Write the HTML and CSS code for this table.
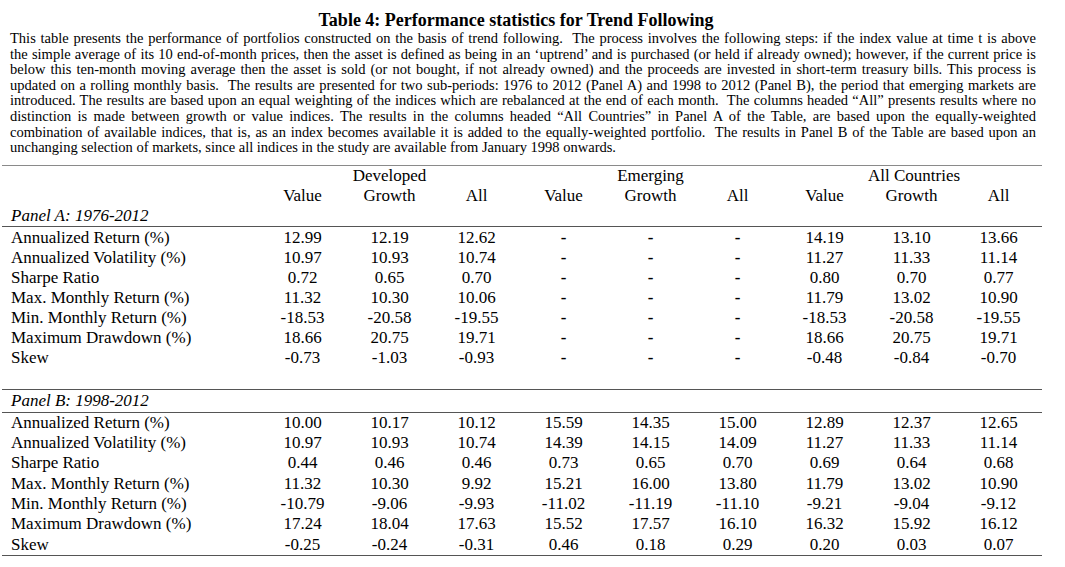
FILE: index.html
```html
<!DOCTYPE html>
<html>
<head>
<meta charset="utf-8">
<link rel="stylesheet" href="styles.css">
</head>
<body>
<div class="page">
  <h1 class="title">Table 4: Performance statistics for Trend Following</h1>
  <p class="caption">
    <span class="ln">This table presents the performance of portfolios constructed on the basis of trend following.&nbsp; The process involves the following steps: if the index value at time t is above</span>
    <span class="ln">the simple average of its 10 end-of-month prices, then the asset is defined as being in an ‘uptrend’ and is purchased (or held if already owned); however, if the current price is</span>
    <span class="ln">below this ten-month moving average then the asset is sold (or not bought, if not already owned) and the proceeds are invested in short-term treasury bills. This process is</span>
    <span class="ln">updated on a rolling monthly basis.&nbsp; The results are presented for two sub-periods: 1976 to 2012 (Panel A) and 1998 to 2012 (Panel B), the period that emerging markets are</span>
    <span class="ln">introduced. The results are based upon an equal weighting of the indices which are rebalanced at the end of each month.&nbsp; The columns headed “All” presents results where no</span>
    <span class="ln">distinction is made between growth or value indices. The results in the columns headed “All Countries” in Panel A of the Table, are based upon the equally-weighted</span>
    <span class="ln">combination of available indices, that is, as an index becomes available it is added to the equally-weighted portfolio.&nbsp; The results in Panel B of the Table are based upon an</span>
    <span class="ln last">unchanging selection of markets, since all indices in the study are available from January 1998 onwards.</span>
  </p>
  <table class="stats">
    <colgroup>
      <col class="c-label">
      <col class="c-num"><col class="c-num"><col class="c-num">
      <col class="c-num"><col class="c-num"><col class="c-num">
      <col class="c-num"><col class="c-num"><col class="c-num">
    </colgroup>
    <thead>
      <tr>
        <th></th>
        <th></th><th>Developed</th><th></th>
        <th></th><th>Emerging</th><th></th>
        <th></th><th>All Countries</th><th></th>
      </tr>
      <tr>
        <th></th>
        <th>Value</th><th>Growth</th><th>All</th>
        <th>Value</th><th>Growth</th><th>All</th>
        <th>Value</th><th>Growth</th><th>All</th>
      </tr>
      <tr class="panel">
        <td class="label"><em>Panel A: 1976-2012</em></td>
        <td></td><td></td><td></td><td></td><td></td><td></td><td></td><td></td><td></td>
      </tr>
    </thead>
    <tbody class="first">
      <tr><td class="label">Annualized Return (%)</td><td>12.99</td><td>12.19</td><td>12.62</td><td class="dash">-</td><td class="dash">-</td><td class="dash">-</td><td>14.19</td><td>13.10</td><td>13.66</td></tr>
      <tr><td class="label">Annualized Volatility (%)</td><td>10.97</td><td>10.93</td><td>10.74</td><td class="dash">-</td><td class="dash">-</td><td class="dash">-</td><td>11.27</td><td>11.33</td><td>11.14</td></tr>
      <tr><td class="label">Sharpe Ratio</td><td>0.72</td><td>0.65</td><td>0.70</td><td class="dash">-</td><td class="dash">-</td><td class="dash">-</td><td>0.80</td><td>0.70</td><td>0.77</td></tr>
      <tr><td class="label">Max. Monthly Return (%)</td><td>11.32</td><td>10.30</td><td>10.06</td><td class="dash">-</td><td class="dash">-</td><td class="dash">-</td><td>11.79</td><td>13.02</td><td>10.90</td></tr>
      <tr><td class="label">Min. Monthly Return (%)</td><td>-18.53</td><td>-20.58</td><td>-19.55</td><td class="dash">-</td><td class="dash">-</td><td class="dash">-</td><td>-18.53</td><td>-20.58</td><td>-19.55</td></tr>
      <tr><td class="label">Maximum Drawdown (%)</td><td>18.66</td><td>20.75</td><td>19.71</td><td class="dash">-</td><td class="dash">-</td><td class="dash">-</td><td>18.66</td><td>20.75</td><td>19.71</td></tr>
      <tr><td class="label">Skew</td><td>-0.73</td><td>-1.03</td><td>-0.93</td><td class="dash">-</td><td class="dash">-</td><td class="dash">-</td><td>-0.48</td><td>-0.84</td><td>-0.70</td></tr>
      <tr class="spacer"><td colspan="10"></td></tr>
    </tbody>
    <tbody class="panel-b">
      <tr class="panel"><td class="label"><em>Panel B: 1998-2012</em></td><td></td><td></td><td></td><td></td><td></td><td></td><td></td><td></td><td></td></tr>
    </tbody>
    <tbody class="last">
      <tr><td class="label">Annualized Return (%)</td><td>10.00</td><td>10.17</td><td>10.12</td><td>15.59</td><td>14.35</td><td>15.00</td><td>12.89</td><td>12.37</td><td>12.65</td></tr>
      <tr><td class="label">Annualized Volatility (%)</td><td>10.97</td><td>10.93</td><td>10.74</td><td>14.39</td><td>14.15</td><td>14.09</td><td>11.27</td><td>11.33</td><td>11.14</td></tr>
      <tr><td class="label">Sharpe Ratio</td><td>0.44</td><td>0.46</td><td>0.46</td><td>0.73</td><td>0.65</td><td>0.70</td><td>0.69</td><td>0.64</td><td>0.68</td></tr>
      <tr><td class="label">Max. Monthly Return (%)</td><td>11.32</td><td>10.30</td><td>9.92</td><td>15.21</td><td>16.00</td><td>13.80</td><td>11.79</td><td>13.02</td><td>10.90</td></tr>
      <tr><td class="label">Min. Monthly Return (%)</td><td>-10.79</td><td>-9.06</td><td>-9.93</td><td>-11.02</td><td>-11.19</td><td>-11.10</td><td>-9.21</td><td>-9.04</td><td>-9.12</td></tr>
      <tr><td class="label">Maximum Drawdown (%)</td><td>17.24</td><td>18.04</td><td>17.63</td><td>15.52</td><td>17.57</td><td>16.10</td><td>16.32</td><td>15.92</td><td>16.12</td></tr>
      <tr><td class="label">Skew</td><td>-0.25</td><td>-0.24</td><td>-0.31</td><td>0.46</td><td>0.18</td><td>0.29</td><td>0.20</td><td>0.03</td><td>0.07</td></tr>
    </tbody>
  </table>
</div>
</body>
</html>
```

FILE: styles.css
```css
html, body {
  margin: 0;
  padding: 0;
  background: #ffffff;
}

body {
  font-family: "Liberation Serif", "Times New Roman", serif;
  color: #000000;
}

.page {
  width: 1040px;
  margin-left: 2px;
  padding-top: 10px;
}

.title {
  margin: 0;
  font-size: 18px;
  line-height: 21px;
  font-weight: bold;
  text-align: center;
  padding-right: 12px;
}

.caption {
  margin: 0;
  padding: 0 6px 9px 8px;
  font-size: 14.5px;
  line-height: 15.6px;
  border-bottom: 1px solid #8a8a8a;
}

.caption .ln {
  display: block;
  text-align: justify;
  text-align-last: justify;
  white-space: nowrap;
}

.caption .ln.last {
  text-align-last: left;
}

.stats {
  border-collapse: collapse;
  table-layout: fixed;
  width: 1040px;
  font-size: 17px;
}

.c-label { width: 257px; }
.c-num { width: 87px; }

.stats th,
.stats td {
  padding: 0;
  height: 20px;
  line-height: 20px;
  font-weight: normal;
  text-align: center;
  white-space: nowrap;
}

.stats .label {
  text-align: left;
  padding-left: 9px;
}

.stats .panel td {
  border-bottom: 1px solid #555555;
}

.stats .first tr:first-child td {
  height: 21px;
  line-height: 21px;
}

.stats .panel-b .panel td {
  border-top: 1px solid #555555;
  height: 21px;
  line-height: 22px;
}

.stats .dash {
  font-weight: bold;
}

.stats .spacer td {
  height: 21px;
}

.stats tbody.last td {
  height: 20.3px;
  line-height: 20.3px;
}

.stats tbody.last tr:last-child td {
  border-bottom: 1px solid #555555;
}
```
